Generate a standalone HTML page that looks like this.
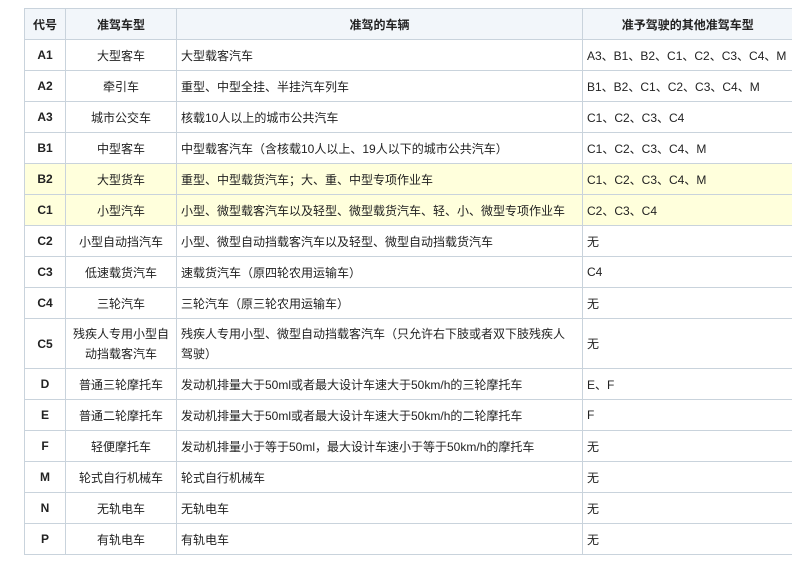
<!DOCTYPE html>
<html><head><meta charset="utf-8"><style>
body{margin:0;background:#fff;width:792px;height:561px;overflow:hidden}
table{position:absolute;left:24px;top:8px;border-collapse:collapse;table-layout:fixed;width:768px;font-family:"Liberation Sans","Noto Sans CJK SC",sans-serif;font-size:12px;color:#222}
td,th{border:1px solid #c9d3dc;padding:0 4px;height:30px;white-space:nowrap;overflow:hidden}
tr td:last-child,tr th:last-child{border-right:none}
th{background:#f2f6fa;font-weight:bold;text-align:center}
td.c{text-align:center}
td.b{font-weight:bold;text-align:center}
tr.y td{background:#ffffdc}
tr.t td{height:49px;white-space:normal;line-height:20px}
</style></head><body>
<table>
<col style="width:41px"><col style="width:111px"><col style="width:406px"><col style="width:210px">
<tr><th>代号</th><th>准驾车型</th><th>准驾的车辆</th><th>准予驾驶的其他准驾车型</th></tr>
<tr><td class="b">A1</td><td class="c">大型客车</td><td>大型载客汽车</td><td>A3、B1、B2、C1、C2、C3、C4、M</td></tr>
<tr><td class="b">A2</td><td class="c">牵引车</td><td>重型、中型全挂、半挂汽车列车</td><td>B1、B2、C1、C2、C3、C4、M</td></tr>
<tr><td class="b">A3</td><td class="c">城市公交车</td><td>核载10人以上的城市公共汽车</td><td>C1、C2、C3、C4</td></tr>
<tr><td class="b">B1</td><td class="c">中型客车</td><td>中型载客汽车（含核载10人以上、19人以下的城市公共汽车）</td><td>C1、C2、C3、C4、M</td></tr>
<tr class="y"><td class="b">B2</td><td class="c">大型货车</td><td>重型、中型载货汽车；大、重、中型专项作业车</td><td>C1、C2、C3、C4、M</td></tr>
<tr class="y"><td class="b">C1</td><td class="c">小型汽车</td><td>小型、微型载客汽车以及轻型、微型载货汽车、轻、小、微型专项作业车</td><td>C2、C3、C4</td></tr>
<tr><td class="b">C2</td><td class="c">小型自动挡汽车</td><td>小型、微型自动挡载客汽车以及轻型、微型自动挡载货汽车</td><td>无</td></tr>
<tr><td class="b">C3</td><td class="c">低速载货汽车</td><td>速载货汽车（原四轮农用运输车）</td><td>C4</td></tr>
<tr><td class="b">C4</td><td class="c">三轮汽车</td><td>三轮汽车（原三轮农用运输车）</td><td>无</td></tr>
<tr class="t"><td class="b">C5</td><td class="c">残疾人专用小型自动挡载客汽车</td><td>残疾人专用小型、微型自动挡载客汽车（只允许右下肢或者双下肢残疾人<br>驾驶）</td><td>无</td></tr>
<tr><td class="b">D</td><td class="c">普通三轮摩托车</td><td>发动机排量大于50ml或者最大设计车速大于50km/h的三轮摩托车</td><td>E、F</td></tr>
<tr><td class="b">E</td><td class="c">普通二轮摩托车</td><td>发动机排量大于50ml或者最大设计车速大于50km/h的二轮摩托车</td><td>F</td></tr>
<tr><td class="b">F</td><td class="c">轻便摩托车</td><td>发动机排量小于等于50ml，最大设计车速小于等于50km/h的摩托车</td><td>无</td></tr>
<tr><td class="b">M</td><td class="c">轮式自行机械车</td><td>轮式自行机械车</td><td>无</td></tr>
<tr><td class="b">N</td><td class="c">无轨电车</td><td>无轨电车</td><td>无</td></tr>
<tr><td class="b">P</td><td class="c">有轨电车</td><td>有轨电车</td><td>无</td></tr>
</table>
</body></html>
